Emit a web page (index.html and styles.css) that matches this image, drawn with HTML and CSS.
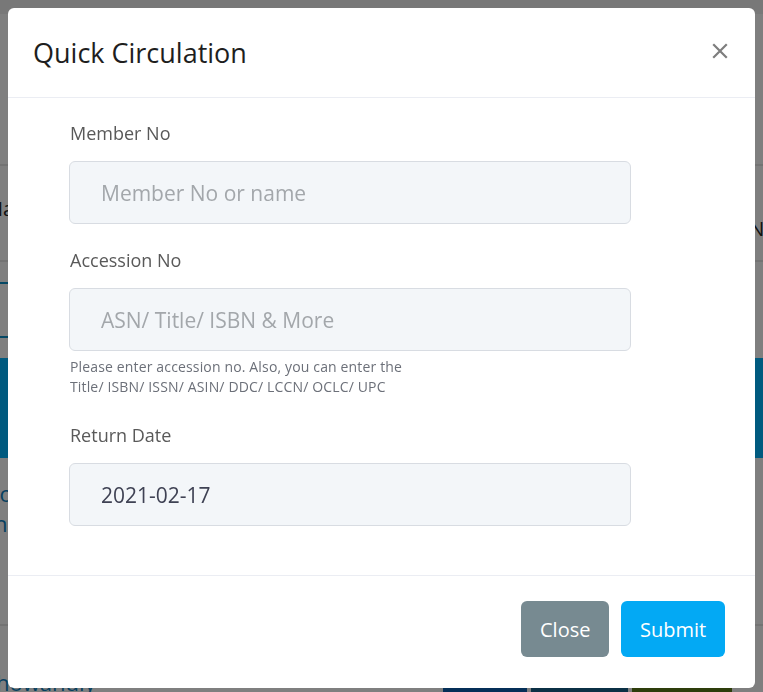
FILE: index.html
```html
<!DOCTYPE html>
<html lang="en">
<head>
<meta charset="utf-8">
<title>Quick Circulation</title>
<link rel="stylesheet" href="styles.css">
</head>
<body>
<div class="page">
  <div class="page-top"></div>
  <div class="page-row row-a"></div>
  <div class="page-row row-b"><span class="bg-text">Na</span><span class="bg-text right">NA</span></div>
  <div class="page-row row-c"><div class="bg-box"></div></div>
  <div class="page-band"></div>
  <div class="page-links"><span>lo</span><span>h</span></div>
  <div class="page-foot">
    <span class="bg-link">howanuly</span>
    <div class="bg-btns"><span class="b1"></span><span class="b2"></span><span class="b3"></span></div>
  </div>
</div>
<div class="backdrop"></div>
<div class="modal">
  <div class="modal-header">
    <h2 class="modal-title">Quick Circulation</h2>
    <button class="close-x" type="button" aria-label="Close">
      <svg width="16" height="16" viewBox="0 0 16 16"><path d="M2 2 L14 14 M14 2 L2 14" stroke="#7e7e7e" stroke-width="2.2" stroke-linecap="square"/></svg>
    </button>
  </div>
  <div class="modal-body">
    <div class="field">
      <label class="label">Member No</label>
      <input class="input" type="text" placeholder="Member No or name">
    </div>
    <div class="field">
      <label class="label">Accession No</label>
      <input class="input" type="text" placeholder="ASN/ Title/ ISBN &amp; More">
      <p class="help">Please enter accession no. Also, you can enter the<br>Title/ ISBN/ ISSN/ ASIN/ DDC/ LCCN/ OCLC/ UPC</p>
    </div>
    <div class="field">
      <label class="label">Return Date</label>
      <input class="input" type="text" value="2021-02-17">
    </div>
  </div>
  <div class="modal-footer">
    <button class="btn btn-close" type="button">Close</button>
    <button class="btn btn-submit" type="button">Submit</button>
  </div>
</div>
</body>
</html>
```
FILE: styles.css
```css
* { box-sizing: border-box; }
html, body { margin: 0; padding: 0; }
body {
  width: 763px;
  height: 692px;
  overflow: hidden;
  font-family: "Open Sans", "Noto Sans", sans-serif;
  background: #ffffff;
}
.page { display: flex; flex-direction: column; height: 692px; }
.page-top { height: 14px; background: #f0f0f0; }
.page-row { border-bottom: 2px solid #e6e6e6; }
.row-a { height: 152px; }
.row-b { height: 96px; display: flex; align-items: center; justify-content: space-between; padding: 0 0 10px; }
.bg-text { font-size: 20px; color: #222; margin-left: -12px; }
.bg-text.right { margin: 40px -14px 0 0; }
.row-c { height: 96px; display: flex; align-items: center; border-bottom: none; }
.bg-box { width: 14px; height: 56px; border: 2px solid #0a90c8; border-left: none; border-radius: 0 4px 4px 0; }
.page-band { height: 100px; background: #00b5ff; }
.page-links { height: 168px; display: flex; flex-direction: column; padding-top: 20px; color: #0a80c0; font-size: 22px; line-height: 30px; border-bottom: 2px solid #e6e6e6; }
.page-links span { margin-left: -6px; }
.page-foot { flex: 1; display: flex; align-items: flex-end; justify-content: space-between; }
.bg-link { color: #0a80c0; font-size: 22px; line-height: 20px; margin-left: -4px; }
.bg-btns { display: flex; gap: 4px; margin-right: 31px; height: 10px; }
.bg-btns span { display: block; height: 10px; }
.b1 { width: 84px; background: #0a5fb0; }
.b2 { width: 97px; background: #17608a; }
.b3 { width: 100px; background: #5c7a18; }

.backdrop { position: fixed; inset: 0; background: rgba(0, 0, 0, 0.5); }

.modal {
  position: fixed;
  left: 8px;
  top: 8px;
  width: 747px;
  height: 680px;
  background: #ffffff;
  border-radius: 6px;
  display: flex;
  flex-direction: column;
}
.modal-header {
  height: 90px;
  border-bottom: 1px solid #ebedf3;
  display: flex;
  align-items: center;
  justify-content: space-between;
  padding: 0 25px 0 25px;
}
.modal-title {
  margin: 0;
  font-size: 27px;
  font-weight: 400;
  color: #1e1e1e;
  padding-bottom: 1px;
}
.close-x { background: none; border: none; padding: 0; width: 16px; height: 16px; display: flex; margin: 0 2px 4px 0; }
.modal-body {
  flex: 1;
  padding: 23px 124px 0 61px;
  display: flex;
  flex-direction: column;
}
.field { display: flex; flex-direction: column; }
.label {
  font-size: 18px;
  color: #595959;
  line-height: 24px;
  padding: 0 0 0 1px;
  margin-bottom: 16px;
}
.input {
  height: 63px;
  width: 562px;
  background: #f3f6f9;
  border: 1px solid #d8dce2;
  border-radius: 6px;
  padding: 0 31px;
  font-family: inherit;
  font-size: 21px;
  color: #3f4254;
  margin-bottom: 24px;
  outline: none;
}
.input::placeholder { color: #a3a7ab; }
.help {
  margin: -18px 0 26px 1px;
  font-size: 14px;
  line-height: 20px;
  letter-spacing: 0.15px;
  color: #6c7079;
}
.modal-footer {
  height: 113px;
  border-top: 1px solid #ebedf3;
  display: flex;
  justify-content: flex-end;
  align-items: flex-start;
  padding: 25px 30px 0 0;
  gap: 12px;
}
.btn {
  height: 56px;
  border: none;
  border-radius: 6px;
  color: #ffffff;
  font-family: inherit;
  font-size: 20px;
  padding: 0 19px;
}
.btn-close { background: #778a91; width: 88px; }
.btn-submit { background: #03a9f4; width: 104px; }
```
